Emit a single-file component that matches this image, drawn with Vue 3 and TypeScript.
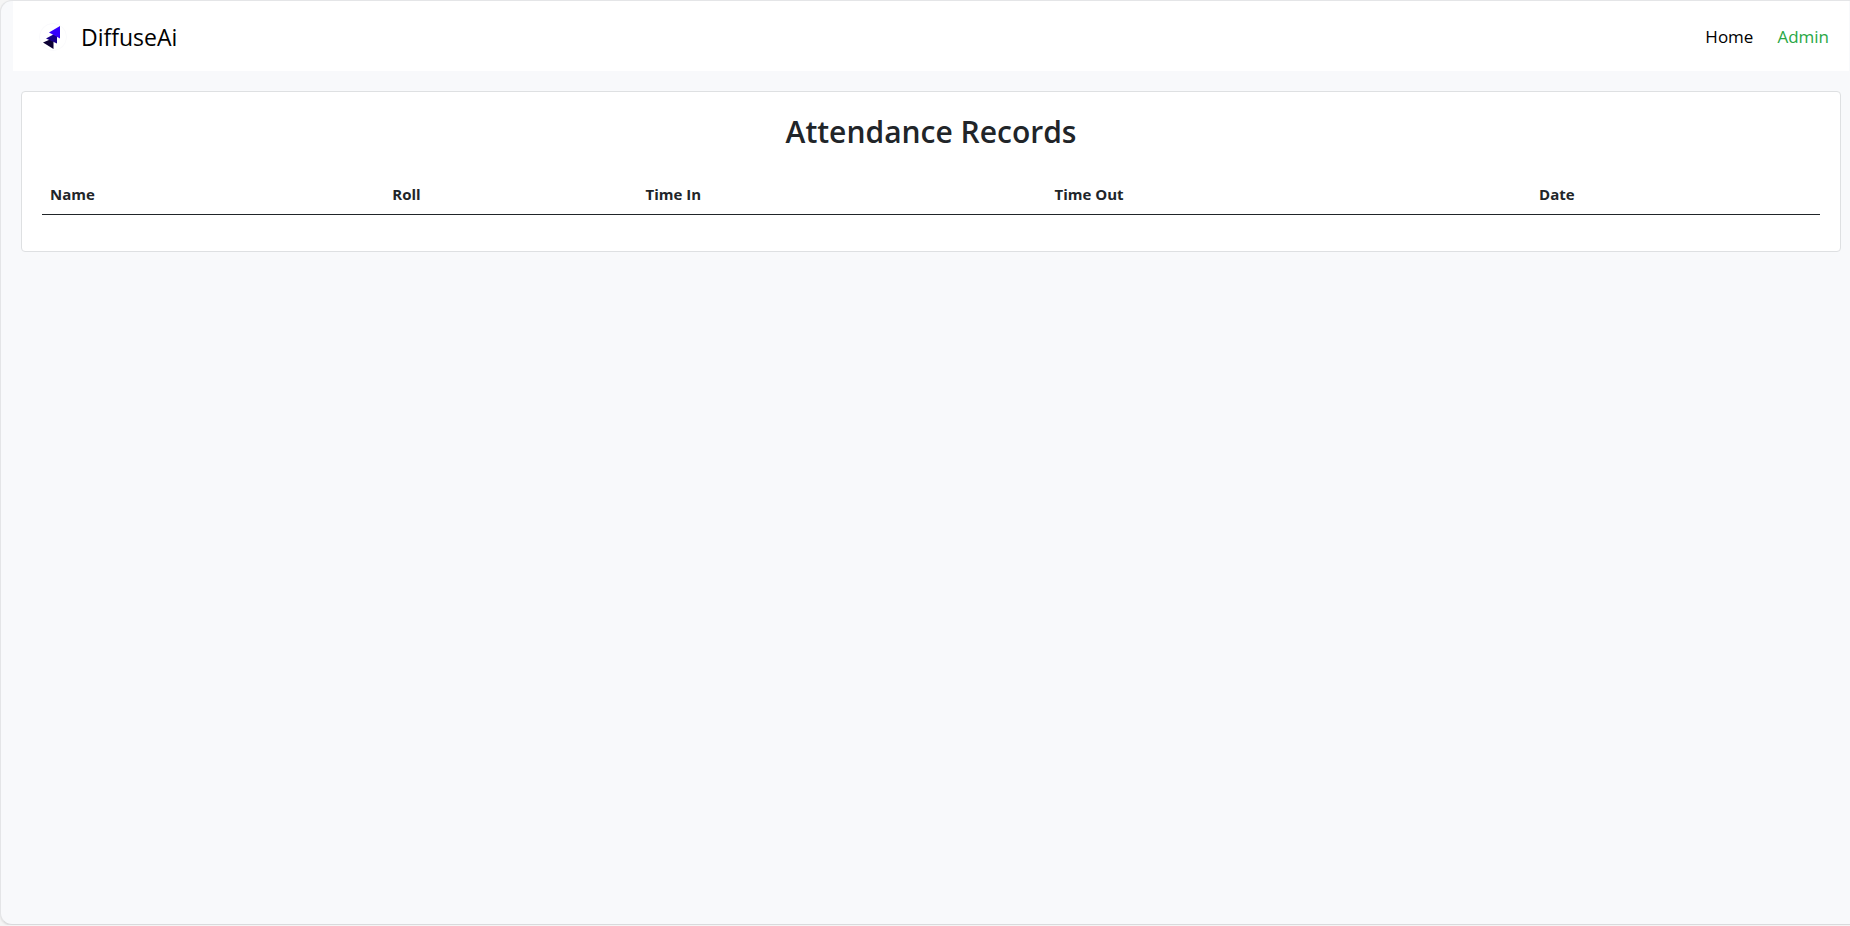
<script setup lang="ts">
interface AttendanceRecord {
  name: string
  roll: string
  timeIn: string
  timeOut: string
  date: string
}

interface Column {
  key: keyof AttendanceRecord
  label: string
}

const columns: Column[] = [
  { key: 'name', label: 'Name' },
  { key: 'roll', label: 'Roll' },
  { key: 'timeIn', label: 'Time In' },
  { key: 'timeOut', label: 'Time Out' },
  { key: 'date', label: 'Date' },
]

const records: AttendanceRecord[] = []
</script>

<template>
  <div class="shell">
    <header class="navbar">
      <a class="brand" href="#">
        <svg class="logo" viewBox="0 0 28 28" aria-hidden="true">
          <circle cx="14" cy="14" r="13.5" fill="#fff" stroke="#fafafc" />
          <path d="M4 19.5 14.5 15V26Z" fill="#0b0033" />
          <path d="M7 15.5 18 9.500V20.500Z" fill="#170087" />
          <path d="M10 9.500 21 3V15.500Z" fill="#3500ff" />
        </svg>
        <span>DiffuseAi</span>
      </a>
      <nav class="links">
        <a href="#">Home</a>
        <a class="active" href="#" aria-current="page">Admin</a>
      </nav>
    </header>
    <main class="card">
      <h2>Attendance Records</h2>
      <table>
        <colgroup>
          <col v-for="column in columns" :key="column.key" :class="column.key" />
        </colgroup>
        <thead>
          <tr>
            <th v-for="column in columns" :key="column.key" scope="col">{{ column.label }}</th>
          </tr>
        </thead>
        <tbody>
          <tr v-for="record in records" :key="record.roll">
            <td v-for="column in columns" :key="column.key">{{ record[column.key] }}</td>
          </tr>
        </tbody>
      </table>
    </main>
  </div>
</template>

<style>
body {
  margin: 0;
  background: #f5f5f5;
}
</style>

<style scoped>
.shell {
  box-sizing: border-box;
  min-height: calc(100vh - 1px);
  padding-left: 12px;
  background: #f8f9fb;
  border: 1px solid #e4e5e7;
  border-right: 0;
  border-bottom-color: #d9dadc;
  border-radius: 12px 0 0 12px;
  box-shadow: 0 1px 2px #dedede;
  color: #212529;
  font-family: "Segoe UI", "Open Sans", "Noto Sans", sans-serif;
}
.navbar {
  display: flex;
  box-sizing: border-box;
  align-items: center;
  justify-content: space-between;
  height: 70px;
  margin-right: 1px;
  padding: 2px 20px 0 26px;
  background: #fff;
}
.brand {
  display: flex;
  align-items: center;
  gap: 14px;
  color: #000;
  font-size: 23px;
  line-height: 32px;
  text-decoration: none;
}
.logo {
  width: 28px;
  height: 28px;
}
.links {
  display: flex;
  gap: 24px;
  font-size: 17px;
  line-height: 24px;
}
.links a {
  color: #000;
  text-decoration: none;
}
.links .active {
  color: #28a745;
}
.card {
  margin: 20px 9px 20px 8px;
  padding: 20px;
  background: #fff;
  border: 1px solid #dee0e2;
  border-radius: 4px;
}
h2 {
  margin: 0 0 24px;
  font-size: 30px;
  font-weight: 600;
  line-height: 39px;
  text-align: center;
}
table {
  width: 100%;
  margin-bottom: 16px;
  border-collapse: collapse;
  table-layout: fixed;
  font-size: 15px;
  line-height: 23px;
}
th,
td {
  padding: 8px;
  text-align: left;
}
th {
  border-bottom: 1px solid #212529;
  font-weight: 700;
}
.name {
  width: 19.25%;
}
.roll {
  width: 14.25%;
}
.timeIn {
  width: 23%;
}
.timeOut {
  width: 27.25%;
}
</style>
